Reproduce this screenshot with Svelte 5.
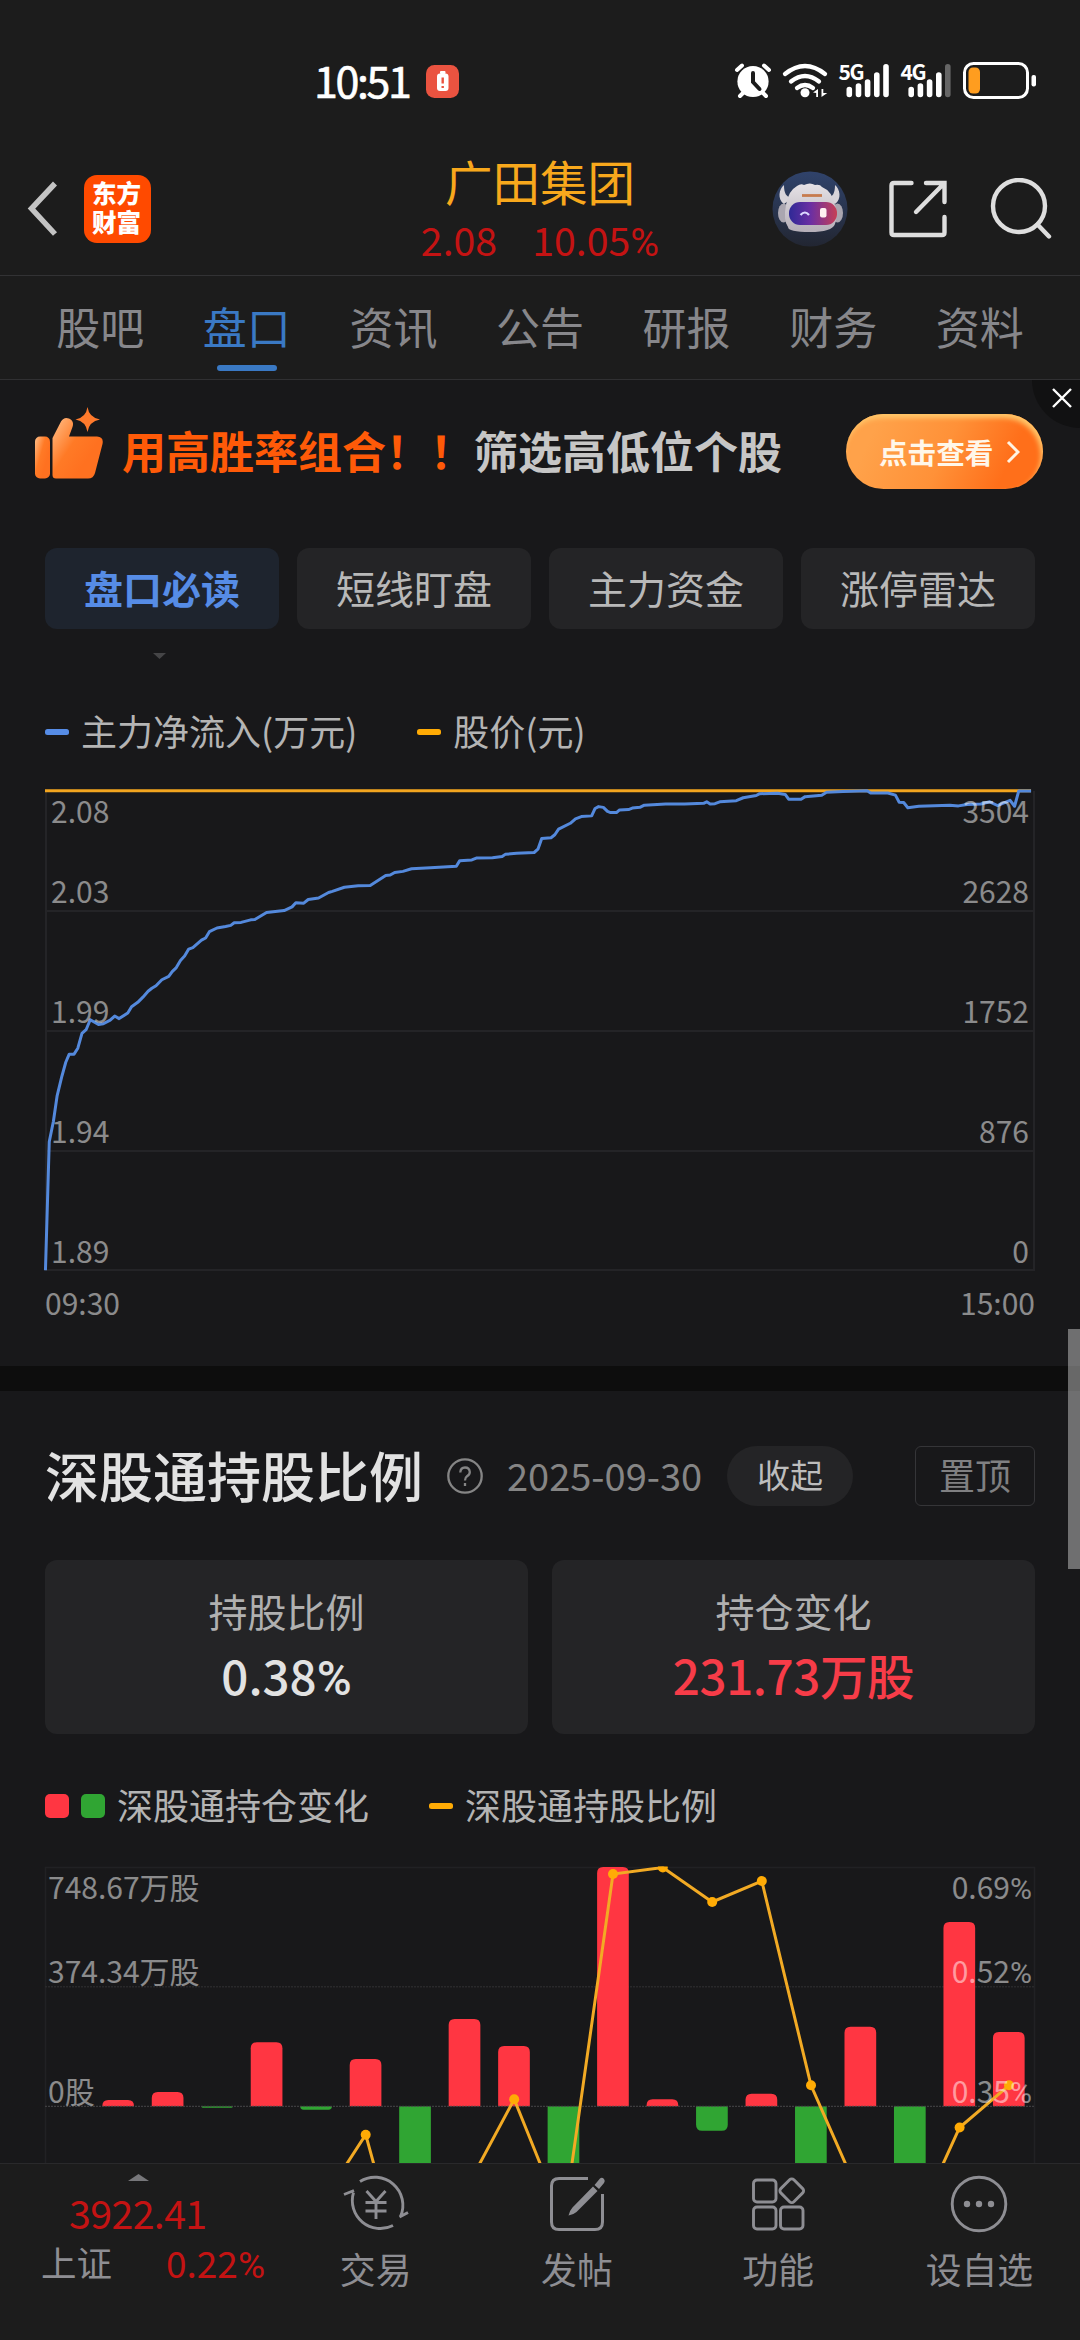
<script>
  const tabs = ['股吧', '盘口', '资讯', '公告', '研报', '财务', '资料'];
  const modes = ['盘口必读', '短线盯盘', '主力资金', '涨停雷达'];

  const flowTicks = [
    { price: '2.08', flow: '3504', y: 820 },
    { price: '2.03', flow: '2628', y: 900 },
    { price: '1.99', flow: '1752', y: 1020 },
    { price: '1.94', flow: '876', y: 1140 },
    { price: '1.89', flow: '0', y: 1260 },
  ];
  const flowGrid = [911, 1031, 1151, 1270];

  // Samples in the plot's own units; the group transform maps them to the canvas.
  const inflow =
    '132,1352 143,1005 155,950 166,880 179,830 191,790 201,768 215,768 226,752 238,712 250,702 262,675 286,688 300,686 320,676 333,665 346,672 371,657 382,640 400,628 415,614 430,598 441,590 453,583 470,567 490,558 500,545 512,534 524,515 536,503 548,484 560,480 585,460 597,454 608,437 630,427 655,423 670,420 680,413 700,412 728,405 740,404 774,385 825,380 848,370 859,359 882,360 895,350 925,346 954,331 965,328 1000,317 1040,313 1075,312 1120,285 1133,284 1146,277 1170,274 1195,267 1250,264 1325,260 1335,245 1370,243 1383,238 1430,237 1458,234 1467,228 1500,225 1551,223 1562,214 1573,185 1600,183 1611,175 1622,160 1656,144 1671,132 1688,126 1718,124 1728,104 1738,99 1752,101 1764,112 1773,115 1790,115 1799,108 1825,107 1836,103 1858,101 1871,95 1933,92 1988,92 2043,90 2052,86 2062,92 2076,91 2090,86 2138,83 2158,75 2196,69 2206,64 2258,63 2280,66 2290,79 2326,79 2338,72 2386,68 2400,60 2448,58 2518,56 2528,62 2578,62 2600,68 2611,87 2624,88 2636,102 2668,98 2758,95 2783,97 2808,93 2848,92 2874,86 2896,96 2933,82 2946,98 2958,57 2994,57';

  const zero = 2106.3;
  const barEnds = [2100, 2092, 2107.7, 2042.3, 2109.7, 2059, 2190, 2019, 2046, 2190, 1867, 2099.3, 2130.7, 2093.7, 2190, 2026.7, 2190, 1922, 2032];
  const bars = barEnds.map((end, i) => {
    const x = 102.3 + i * 49.48;
    const h = Math.abs(end - zero);
    const r = Math.min(6, h);
    const s = end < zero ? 1 : -1;
    return {
      up: end < zero,
      d: `M${x} ${zero}V${end + s * r}Q${x} ${end} ${x + r} ${end}H${x + 31.7 - r}Q${x + 31.7} ${end} ${x + 31.7} ${end + s * r}V${zero}Z`,
    };
  });
  const ratio = [[316.2, 2211], [365.7, 2134.7], [415.3, 2315], [464.7, 2191.6], [514.2, 2099.3], [563.7, 2222], [613, 1874], [662.8, 1867.5], [712.2, 1902], [761.8, 1881], [811, 2085.3], [860.6, 2198], [910.2, 2236], [959.6, 2127.5], [1009, 2085.3]];
  const ratioTicks = [['0.69', 1899], ['0.52', 1983], ['0.35', 2103]];
</script>

<div class="screen">
  <header>
    <div class="status">
      <span class="clock">10:51</span>
      <svg class="warn" viewBox="0 0 33 33">
        <rect width="33" height="33" rx="8.5" fill="#ea5340" />
        <rect x="14" y="6" width="5.5" height="3" rx="1" fill="#fff" />
        <rect x="11" y="8.5" width="11.5" height="17.5" rx="3" fill="#fff" />
        <path d="M16.7 12.5v6M16.7 21v2" stroke="#ea5340" stroke-width="2.4" />
      </svg>
      <svg class="sysicons" viewBox="730 48 310 64">
        <g fill="#fff">
          <circle cx="753" cy="81.5" r="15.6" />
          <path d="M737 70l5-4.500M769 70l-5-4.500M744 92l-4 4M762 92l4 4" stroke="#fff" stroke-width="4" stroke-linecap="round" />
          <path d="M753 73v9l6.500 7" fill="none" stroke="#1c1c1c" stroke-width="4" stroke-linecap="round" />
          <g fill="none" stroke="#fff" stroke-width="4.300" stroke-linecap="round">
            <path d="M785 74q20-16 40 0M791 81.500q14-11 28 0M797 88q8-6 16 0" />
          </g>
          <circle cx="805" cy="92.800" r="4.500" />
          <path d="M813 92.500l5-3.500v8h-1.800v-4zM821.500 97v-8h1.800v4h4z" />
        </g>
        <text class="net" x="838.500" y="80">5G</text>
        <text class="net" x="900.500" y="80">4G</text>
        <g stroke="#fff" stroke-width="5.600" stroke-linecap="round">
          <path d="M849.300 89.500v5M858.500 86v8.500M867.600 82v12.500M876.800 75v19.500M886 66.700v27.800" />
          <path d="M911.200 89.500v5M920.400 86v8.500M929.600 82v12.500M938.800 75v19.500" />
          <path d="M947.800 66.700v27.800" stroke="#666" />
        </g>
        <rect x="964.500" y="63.500" width="63" height="34" rx="9" fill="none" stroke="#fff" stroke-width="3" />
        <rect x="968.500" y="67.500" width="11.500" height="26" rx="4.500" fill="#ff9d1f" />
        <rect x="1031.500" y="75" width="4.500" height="11.500" rx="2" fill="#fff" />
      </svg>
    </div>

    <div class="titlebar">
      <div class="left">
        <svg class="back" viewBox="0 0 32 58"><path d="M28 3.500L4.500 28.500 28 54" fill="none" stroke="#c3c3c3" stroke-width="5.500" /></svg>
        <div class="logo"><span>东方财富</span></div>
      </div>
      <div class="stock">
        <div class="name">广田集团</div>
        <div class="quote"><span>2.08</span><span>10.05<i class="pct">%</i></span></div>
      </div>
      <div class="actions">
        <svg class="bot" viewBox="0 0 76 76">
          <defs>
            <linearGradient id="sky" x1="0" y1="0" x2="0" y2="1"><stop offset="0" stop-color="#30436b" /><stop offset="1" stop-color="#222632" /></linearGradient>
            <linearGradient id="visor"><stop offset="0" stop-color="#2f2996" /><stop offset=".45" stop-color="#6b2fa3" /><stop offset="1" stop-color="#c63f55" /></linearGradient>
            <linearGradient id="shell" x1="0" y1="0" x2="0" y2="1"><stop offset="0" stop-color="#e6e2e6" /><stop offset="1" stop-color="#b5afb8" /></linearGradient>
          </defs>
          <circle cx="38" cy="38" r="37.500" fill="url(#sky)" />
          <ellipse cx="11.500" cy="42" rx="5.500" ry="9.500" fill="#aaa6b0" />
          <ellipse cx="65.500" cy="42" rx="5.500" ry="9.500" fill="#aaa6b0" />
          <path d="M12 14c-5 4-7 14 0 19l8-6c-6-1-8-5-8-13zM63 14c5 4 7 14 0 19l-8-6c6-1 8-5 8-13z" fill="#d8d4d9" />
          <path d="M25 15q4-3 7-1 6-3 11 0 5-1 7 2 10 4 13 18 3 12 0 19-3 8-25 8T16 56q-5-7-2-22 2-14 11-19z" fill="url(#shell)" />
          <rect x="17" y="31" width="48" height="23" rx="11" fill="url(#visor)" />
          <path d="M30 24.500h20" stroke="#c77b4e" stroke-width="2.800" />
          <path d="M28.500 44q4.500-5 8.500 0" fill="none" stroke="#dcd8ff" stroke-width="2.200" />
          <rect x="48" y="37" width="6.500" height="9.500" rx="2" fill="#fff0f2" />
        </svg>
        <svg class="share" viewBox="0 0 58 58"><path d="M22.500 3H5Q2.500 3 2.500 5.500V52.500Q2.500 55 5 55H53Q55.500 55 55.500 52.500V37M37 3H55.500V22M54 4.500L27 32" fill="none" stroke="#dedede" stroke-width="4.400" stroke-linecap="round" /></svg>
        <svg class="search" viewBox="0 0 62 62"><circle cx="29" cy="28" r="26" fill="none" stroke="#dedede" stroke-width="4.400" /><path d="M47.500 46.500L59 58.500" stroke="#dedede" stroke-width="4.400" stroke-linecap="round" /></svg>
      </div>
    </div>

    <nav>
      {#each tabs as tab, i}<span class:on={i === 1}>{tab}</span>{/each}
    </nav>
  </header>

  <section class="promo">
    <svg class="thumb" viewBox="0 0 68 74">
      <defs><linearGradient id="flame" x1="0" y1="0" x2=".75" y2=".6"><stop offset="0" stop-color="#ffc08a" /><stop offset=".6" stop-color="#ff7a26" /><stop offset="1" stop-color="#ff7120" /></linearGradient></defs>
      <rect y="29.500" width="15" height="42" rx="5" fill="url(#flame)" />
      <path d="M17.500 31L26 14.500Q29 9.500 34 11.500 39.500 14 37.500 20L34 29.500H62Q69 30 67.500 37L60 66Q58.500 71.500 53 71.500H21Q17.500 71.500 17.500 68Z" fill="url(#flame)" />
      <path d="M52.500 0Q54 10.500 65 12.500 54 14.500 52.500 25 51 14.500 40.500 12.500 51 10.500 52.500 0Z" fill="#ff7a2c" />
    </svg>
    <p class="slogan"><em>用高胜率组合！！</em>筛选高低位个股</p>
    <div class="cta">点击查看
      <svg viewBox="0 0 14 24"><path d="M2 2l10 10L2 22" fill="none" stroke="#fff3e2" stroke-width="3" /></svg>
    </div>
    <div class="close"><svg viewBox="0 0 20 20"><path d="M1 1l18 18M19 1L1 19" stroke="#fff" stroke-width="2.400" /></svg></div>
  </section>

  <div class="modes">
    {#each modes as mode, i}<div class:on={i === 0}>{mode}</div>{/each}
  </div>
  <div class="pointer"><i></i></div>

  <div class="legend">
    <i class="dash blue"></i><span>主力净流入(万元)</span>
    <i class="dash gold"></i><span>股价(元)</span>
  </div>

  <svg class="chart" viewBox="0 770 1080 596" height="596">
    <g stroke="#242427" stroke-width="2" fill="none">
      {#each flowGrid as y}<path d="M45 {y}H1035" />{/each}
      <path d="M46 791V1270M1034 791V1270" />
    </g>
    <path d="M45 790.800H1031" stroke="#f2a51f" stroke-width="3" />
    <g transform="translate(0 770) scale(.34439 .36996)">
      <polyline points={inflow} fill="none" stroke="#5489dc" stroke-width="3" stroke-linejoin="round" vector-effect="non-scaling-stroke" />
    </g>
    {#each flowTicks as t}
      <text class="tick" x="51" y={t.y + 3}>{t.price}</text>
      <text class="tick end" x="1029" y={t.y + 3}>{t.flow}</text>
    {/each}
    <text class="tick" x="45" y="1315">09:30</text>
    <text class="tick end" x="1035" y="1315">15:00</text>
  </svg>

  <div class="band"></div>

  <section class="holding">
    <div class="head">
      <h2>深股通持股比例</h2>
      <svg class="help" viewBox="0 0 36 36"><circle cx="18" cy="18" r="16.700" fill="none" stroke="#858585" stroke-width="2.300" /><path d="M13.300 14.500Q13.500 9.500 18 9.500T22.800 14Q22.800 16.500 20 18.300 18 19.700 18 22.500M18 25v3" fill="none" stroke="#858585" stroke-width="2.300" /></svg>
      <time>2025-09-30</time>
      <button class="fold">收起</button>
      <button class="pin">置顶</button>
    </div>
    <div class="cards">
      <div><span>持股比例</span><b>0.38<i class="pct">%</i></b></div>
      <div><span>持仓变化</span><b class="up">231.73万股</b></div>
    </div>
    <div class="legend second">
      <i class="sq red"></i><i class="sq green"></i><span>深股通持仓变化</span>
      <i class="dash gold"></i><span>深股通持股比例</span>
    </div>
  </section>

  <svg class="chart bars" viewBox="0 1850 1080 313" height="313">
    <defs><clipPath id="plot"><rect x="45" y="1866.500" width="990" height="320" /></clipPath></defs>
    <g stroke="#212124" stroke-width="1.500" fill="none">
      <path d="M45.500 2164V1867.500H1034.500V2164" />
      <path d="M45 1986.700H1035" stroke="#29292b" stroke-dasharray="2 1" />
    </g>
    {#each bars as b}<path d={b.d} fill={b.up ? '#ff3642' : '#30a533'} />{/each}
    <path d="M45 2106.300H1035" stroke="#48484a" stroke-dasharray="2 1" />
    <g clip-path="url(#plot)">
      <polyline points={ratio.map((p) => p.join(',')).join(' ')} fill="none" stroke="#f2aa24" stroke-width="3" />
      {#each ratio as p}<circle cx={p[0]} cy={p[1]} r="5" fill="#ffab05" />{/each}
    </g>
    <text class="tick" x="48" y="1899">748.67万股</text>
    <text class="tick" x="48" y="1983">374.34万股</text>
    <text class="tick" x="48" y="2103">0股</text>
    {#each ratioTicks as [value, y]}
      <text class="tick end" x="1032" {y}>{value}<tspan class="pct">%</tspan></text>
    {/each}
  </svg>

  <footer>
    <div class="index">
      <i class="caret"></i>
      <div class="points">3922.41</div>
      <div class="row"><span>上证</span><em>0.22<i class="pct">%</i></em></div>
    </div>
    <div class="item">
      <svg viewBox="0 0 66 60"><g fill="none" stroke="#8e8e93" stroke-width="2.900"><path d="M17 7.500A28 28 0 0 1 57.500 42.500M56.500 43L65 38.500M50 51.500A28 28 0 0 1 10.500 18.500M1 20.500L11 16.500" /><path d="M23.500 17L33 27.500 42.500 17M22.500 28.500h21M22.500 37h21M33 27v18" /></g></svg>
      <span>交易</span>
    </div>
    <div class="item">
      <svg viewBox="0 0 66 60"><path d="M44 4.500H15Q7.500 4.500 7.500 12V48Q7.500 55.500 15 55.500H51Q58.500 55.500 58.500 48V20" fill="none" stroke="#8e8e93" stroke-width="3" /><path d="M49 12.500L53.500 17 32.500 38Q29 41 24.500 41.500 26 36 28.500 33.500ZM50.500 11L56 4.500Q58 3 60 5 61.500 7 60 9L55 15Z" fill="#8e8e93" /></svg>
      <span>发帖</span>
    </div>
    <div class="item">
      <svg viewBox="0 0 66 60"><g fill="none" stroke="#8e8e93" stroke-width="2.900"><rect x="8.500" y="6" width="22.500" height="22" rx="3.500" /><rect x="8.500" y="33" width="22.500" height="22" rx="3.500" /><rect x="35.500" y="33" width="22.500" height="22" rx="3.500" /><rect x="37.500" y="7.500" width="18.500" height="18.500" rx="3" transform="rotate(45 46.750 16.750)" /></g></svg>
      <span>功能</span>
    </div>
    <div class="item">
      <svg viewBox="0 0 66 60"><circle cx="33" cy="30" r="26.800" fill="none" stroke="#8e8e93" stroke-width="2.900" /><g fill="#8e8e93"><circle cx="21" cy="30" r="3.200" /><circle cx="33" cy="30" r="3.200" /><circle cx="45" cy="30" r="3.200" /></g></svg>
      <span>设自选</span>
    </div>
  </footer>

  <div class="scroll"></div>
</div>

<style>
  :global(body) { margin: 0; background: #18181a; }
  .screen { position: relative; width: 1080px; height: 2340px; overflow: hidden; background: #18181a; color: #b4b4b4; font-family: "Noto Sans CJK SC", sans-serif; font-weight: 400; display: flex; flex-direction: column; }
  .screen > * { flex: none; }
  svg { display: block; flex: none; }
  .pct { font-family: Roboto, "Noto Sans CJK SC", sans-serif; font-style: normal; line-height: 1; }
  header { background: #1c1c1c; height: 380px; box-sizing: border-box; border-bottom: 1px solid #303032; }
  .status { display: flex; align-items: center; padding: 0 40px 0 314px; box-sizing: border-box; color: #fff; height: 162px; }
  .clock { font-size: 43px; line-height: 50px; font-weight: 400; width: 112px; margin-top: -5px; letter-spacing: -2.400px; -webkit-text-stroke: .6px #fff; }
  .warn { width: 33px; height: 33px; }
  .sysicons { width: 310px; height: 64px; margin-left: auto; margin-top: -2px; }
  .net { font-size: 21px; font-weight: 700; fill: #fff; letter-spacing: -1.500px; }
  .titlebar { height: 114px; display: grid; grid-template-columns: 1fr 240px 1fr; border-bottom: 1px solid #323234; box-sizing: border-box; }
  .left, .actions { display: flex; align-items: center; height: 93px; }
  .left { padding-left: 27px; gap: 24.500px; }
  .back { width: 32px; height: 58px; }
  .logo { width: 67px; height: 68px; border-radius: 13px; background: #ff4a00; color: #fff; display: flex; align-items: center; justify-content: center; font-size: 24.500px; line-height: 29px; font-weight: 900; }
  .logo span { width: 50px; word-break: break-all; margin-top: -4px; }
  .stock { text-align: center; white-space: nowrap; }
  .name { color: #f8a81c; font-size: 47.500px; line-height: 52px; height: 52px; margin-top: -7px; }
  .quote { color: #c41313; font-size: 39.300px; line-height: 60px; display: flex; justify-content: center; gap: 35px; margin-top: 2px; }
  .actions { justify-content: flex-end; padding-right: 29px; }
  .bot { width: 76px; height: 76px; }
  .share { width: 58px; height: 58px; margin-left: 41px; }
  .search { width: 62px; height: 62px; margin-left: 43px; margin-right: -1px; }
  nav { height: 103px; display: flex; padding: 0 27px; }
  nav span { flex: 1; display: flex; flex-direction: column; align-items: center; font-size: 44px; line-height: 100px; color: #87878b; height: 103px; }
  nav .on { color: #3a79c4; }
  nav .on::after { content: ""; width: 60px; height: 6px; border-radius: 3px; background: #3a79c4; margin-top: -11px; }
  .promo { position: relative; height: 168px; display: flex; align-items: flex-start; padding-left: 35px; box-sizing: border-box; }
  .thumb { width: 68px; height: 74px; margin-top: 27px; }
  .slogan { margin: 40px 0 0 19px; font-size: 44px; line-height: 60px; font-weight: 700; color: #c6c6c6; white-space: nowrap; width: 724px; }
  .slogan em { font-style: normal; color: #ff5a08; }
  .cta { width: 197px; height: 75px; border-radius: 38px; margin-top: 34px; background: linear-gradient(115deg, #ffa24a 15%, #ff9138 50%, #ff6f1a 80%); box-shadow: inset -2px 4px 5px #ffc76a; color: #fff7ea; font-size: 28.600px; font-weight: 700; line-height: 72px; display: flex; align-items: center; padding-left: 33px; box-sizing: border-box; gap: 13px; white-space: nowrap; }
  .cta svg { width: 14px; height: 24px; }
  .close { position: absolute; right: 0; top: 0; width: 48px; height: 48px; background: #111112; border-bottom-left-radius: 48px; }
  .close svg { width: 20px; height: 20px; margin: 8px 0 0 20px; }
  .modes { display: grid; grid-template-columns: repeat(4, 1fr); gap: 18px; padding: 0 45px; height: 81px; }
  .modes div { background: #242426; border-radius: 12px; text-align: center; font-size: 39px; line-height: 78px; color: #b8b8b8; }
  .modes .on { background: #1e242e; color: #568ce6; font-weight: 700; }
  .pointer { height: 73px; padding: 24px 0 0 153px; box-sizing: border-box; }
  .pointer i { display: block; width: 13px; height: 6px; background: #454547; clip-path: polygon(0 0, 100% 0, 50% 100%); }
  .legend { display: flex; align-items: center; height: 60px; padding-left: 45px; font-size: 36px; line-height: 56px; white-space: nowrap; }
  .legend span { padding-left: 12px; position: relative; top: -2px; }
  .dash { width: 24px; height: 6px; border-radius: 2.500px; }
  .blue { background: #568ce6; }
  .gold { background: #ffab05; }
  .legend span + .dash { margin-left: 60px; }
  .chart { width: 1080px; margin-top: 8px; }
  .chart.bars { margin-top: 0; }
  .tick { font-size: 30px; fill: #ffffff80; }
  .end { text-anchor: end; }
  .band { height: 25px; background: #0d0d0d; }
  .holding { height: 459px; padding: 0 45px; box-sizing: border-box; }
  .head { display: flex; align-items: center; height: 169px; }
  h2 { margin: 0; font-size: 54px; line-height: 80px; font-weight: 500; color: #e2e2e2; width: 402px; white-space: nowrap; position: relative; top: -1px; }
  .help { width: 36px; height: 36px; }
  time { font-size: 38px; color: #858585; margin-left: 24px; width: 220px; white-space: nowrap; position: relative; top: -1px; }
  button { font-family: inherit; margin: 0; padding: 0 0 4px; height: 60px; box-sizing: border-box; white-space: nowrap; }
  .fold { width: 126px; border: 0; border-radius: 30px; background: #242426; color: #bdbdbd; font-size: 33px; line-height: 54px; }
  .pin { width: 120px; margin-left: auto; background: none; border: 1px solid #353538; border-radius: 6px; color: #808082; font-size: 36px; line-height: 52px; }
  .cards { display: grid; grid-template-columns: 1fr 1fr; gap: 24px; }
  .cards div { height: 174px; background: #242426; border-radius: 12px; display: flex; flex-direction: column; align-items: center; }
  .cards span { font-size: 39px; line-height: 60px; margin-top: 20px; color: #b0b0b0; }
  .cards b { font-size: 47.500px; line-height: 66px; font-weight: 500; color: #e2e2e2; margin-top: 2px; }
  .cards .up { color: #f73c48; letter-spacing: -.4px; }
  .second { padding: 0; margin-top: 42px; }
  .sq { width: 24px; height: 24px; border-radius: 5px; }
  .sq + .sq { margin-left: 12px; }
  .red { background: #ff3642; }
  .green { background: #30a533; }
  footer { height: 177px; background: #1c1c1c; border-top: 1px solid #29292b; box-sizing: border-box; display: flex; }
  .index { width: 275px; display: flex; flex-direction: column; }
  .caret { width: 21px; height: 7px; background: #77777a; clip-path: polygon(50% 0, 100% 100%, 0 100%); margin: 10px 0 0 128px; }
  .points { color: #c41313; font-size: 39.300px; line-height: 50px; margin: 6px 0 0 69px; letter-spacing: -.6px; }
  .row { display: flex; font-size: 35.500px; line-height: 50px; color: #8e8e93; padding-left: 41px; }
  .row em { font-style: normal; color: #c41313; font-size: 37px; margin-left: 54px; }
  .item { flex: 1; display: flex; flex-direction: column; align-items: center; color: #8e8e93; font-size: 35.800px; line-height: 50px; }
  .item svg { width: 66px; height: 60px; margin: 10px 0 9px; }
  .scroll { position: absolute; right: 0; top: 1329px; width: 12px; height: 240px; background: #ffffff60; }
</style>
